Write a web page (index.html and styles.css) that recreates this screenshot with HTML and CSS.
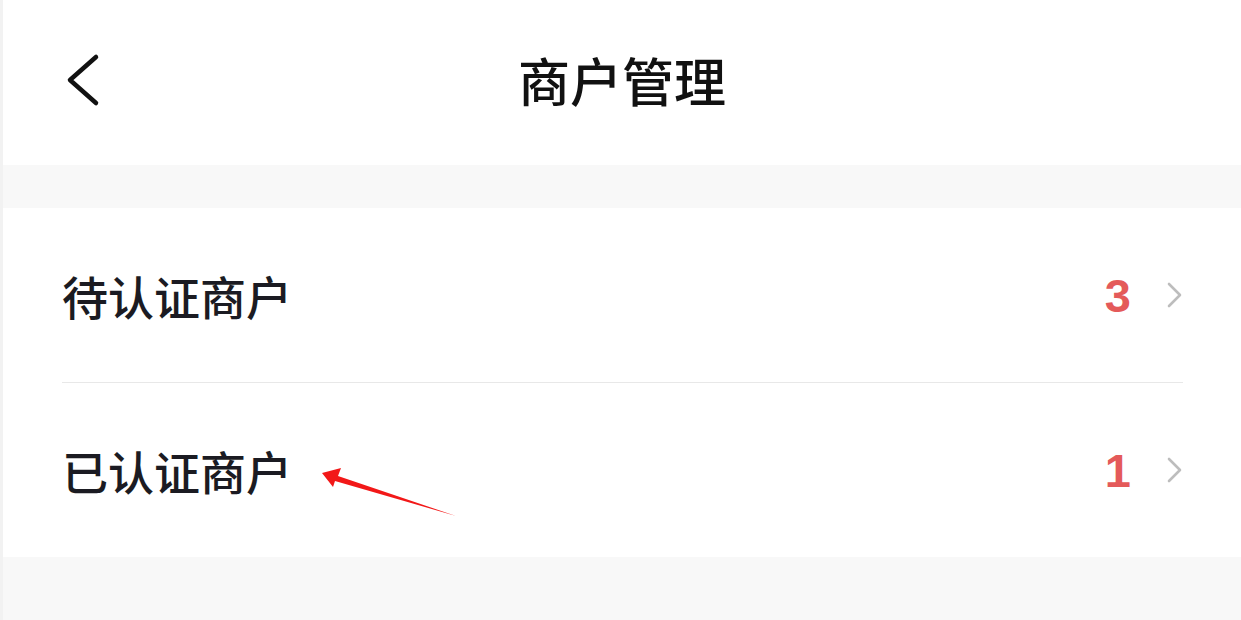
FILE: index.html
```html
<!DOCTYPE html>
<html>
	<head>
		<meta charset="UTF-8">
		<title>商户管理</title>
		<link rel="stylesheet" href="styles.css">
	</head>
	<body>
	<div id="box">
	    <div class="head">
	        <a class="back" href="javascript:;">
	            <svg width="34" height="56" viewBox="0 0 34 56"><polyline points="30,4 4,27 30,50" fill="none" stroke="#111" stroke-width="4.5" stroke-linecap="round" stroke-linejoin="round"/></svg>
	        </a>
	        <h1>商户管理</h1>
	        <span></span>
	    </div>

	    <ul class="list">
	        <li>
	            <a href="javascript:;">
	                <span class="name">待认证商户</span>
	                <span class="num">3</span>
	                <svg class="more" width="16" height="26" viewBox="0 0 16 26"><polyline points="2,2 13,13 2,24" fill="none" stroke="#bdbdbd" stroke-width="2.6" stroke-linecap="round" stroke-linejoin="round"/></svg>
	            </a>
	        </li>
	        <li>
	            <a href="javascript:;">
	                <span class="name">已认证商户</span>
	                <span class="num">1</span>
	                <svg class="more" width="16" height="26" viewBox="0 0 16 26"><polyline points="2,2 13,13 2,24" fill="none" stroke="#bdbdbd" stroke-width="2.6" stroke-linecap="round" stroke-linejoin="round"/></svg>
	            </a>
	        </li>
	    </ul>

	    <!--标注箭头-->
	    <svg class="mark" width="1241" height="620" viewBox="0 0 1241 620"><polygon points="322,473 341,468 338,476 456,516 335,481 333,487" fill="#f21818"/></svg>
	</div>
	</body>
</html>
```

FILE: styles.css
```css
html,body{
    margin:0;
    padding:0;
}
body{
    background-color:#f8f8f8;
    font-family:"Noto Sans CJK SC","Noto Sans",sans-serif;
    color:#1b1b22;
}
#box{
    position:relative;
    min-height:620px;
    border-left:3px solid #f2f2f2;
}
.head{
    height:165px;
    background-color:#fff;
    display:grid;
    grid-template-columns:1fr auto 1fr;
    align-items:center;
}
.head .back{
    display:flex;
    padding:0 0 4px 63px;
}
.head h1{
    margin:0;
    font-size:52px;
    font-weight:500;
    color:#111;
    line-height:1;
    padding-bottom:6px;
}
.list{
    list-style:none;
    margin:43px 0 0;
    padding:0;
    background-color:#fff;
}
.list li{
    padding:0 58px 0 59px;
}
.list li + li a{
    border-top:1px solid #e8e8e8;
}
.list li a{
    display:flex;
    align-items:center;
    height:174px;
    text-decoration:none;
    color:#1b1b22;
}
.name{
    flex:1;
    font-size:46px;
    font-weight:500;
    line-height:1;
}
.num{
    font-family:"Liberation Sans",Arial,sans-serif;
    font-weight:bold;
    font-size:47px;
    color:#e45a5a;
    margin-right:36px;
    line-height:1;
}
.more{
    display:block;
}
.mark{
    position:absolute;
    left:-3px;
    top:0;
    pointer-events:none;
}
```
